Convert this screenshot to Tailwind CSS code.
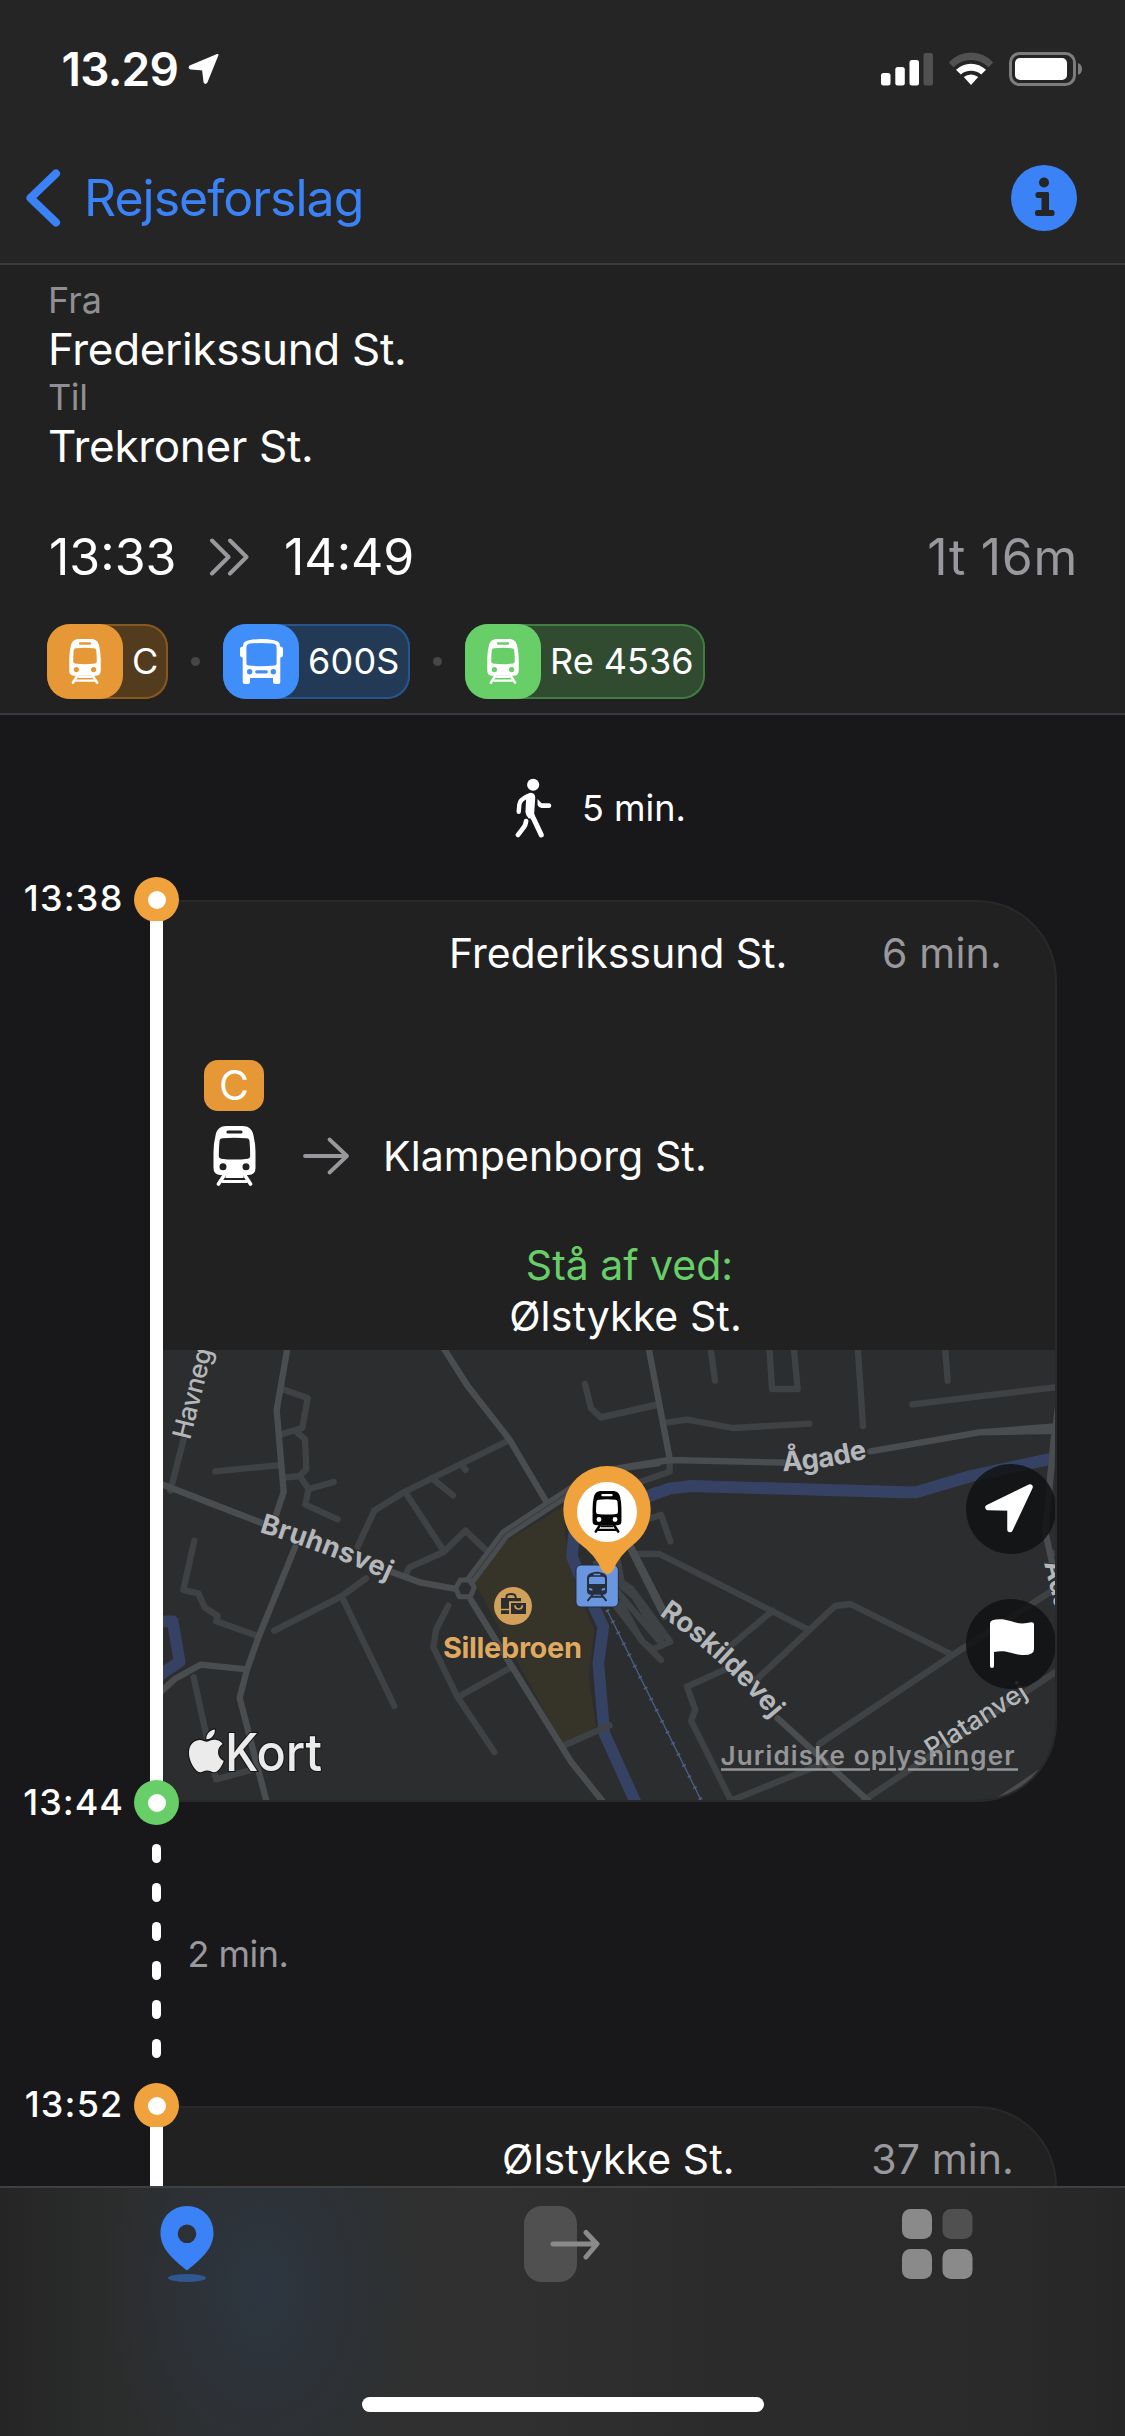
<!DOCTYPE html>
<html lang="da">
<head>
<meta charset="utf-8">
<title>Rejseforslag</title>
<script src="https://cdn.jsdelivr.net/npm/@tailwindcss/browser@4"></script>
</head>
<body class="bg-[#18181a] text-white font-['Inter',sans-serif] font-normal">
<svg width="0" height="0" class="absolute">
  <defs>
    <symbol id="train" viewBox="0 0 42 60">
      <path fill="currentColor" fill-rule="evenodd" d="M13 0H29C35 0 38.500 3 39.800 8.500Q42 18 42 26V42Q42 49 35 49H7Q0 49 0 42V26Q0 18 2.200 8.500C3.500 3 7 0 13 0ZM14.500 4.400a1.600 1.600 0 0 0 0 3.200H27.500a1.600 1.600 0 0 0 0-3.200ZM9 12.300Q6.400 12.300 6 15Q5.300 22 5.300 30Q5.300 32.200 7.500 32.700Q21 34.500 34.500 32.700Q36.700 32.200 36.700 30Q36.700 22 36 15Q35.600 12.300 33 12.300Q21 11.300 9 12.300ZM9.500 37.200a3.500 3.500 0 1 0 0 7a3.500 3.500 0 1 0 0-7ZM32.500 37.200a3.500 3.500 0 1 0 0 7a3.500 3.500 0 1 0 0-7Z"/>
      <path fill="none" stroke="currentColor" stroke-linecap="round" stroke-width="3.600" d="M10.500 49.500L5 58M31.500 49.500L37 58"/>
      <path fill="none" stroke="currentColor" stroke-width="3" d="M8 55.600H34M12 50.500H30" />
    </symbol>
    <symbol id="bus" viewBox="0 0 43 45">
      <path fill="currentColor" fill-rule="evenodd" d="M9 1.200Q21.500 -1 34 1.200Q40 2 40 7V7.500Q43 7.500 43 10V16Q43 18.300 40.300 18.500V43Q40.300 45 38.300 45H35Q33 45 33 43V39H10V43Q10 45 8 45H4.700Q2.700 45 2.700 43V18.500Q0 18.300 0 16V10Q0 7.500 3 7.500V7Q3 2 9 1.200ZM10 4.600Q6.400 5 6.400 8.500V24.500Q6.400 26.300 8.500 26.500Q21.500 28 34.500 26.500Q36.600 26.300 36.600 24.500V8.500Q36.600 5 33 4.600Q21.500 3.300 10 4.600ZM9.700 30a2.700 2.700 0 1 0 0 5.400a2.700 2.700 0 1 0 0-5.400ZM33.300 30a2.700 2.700 0 1 0 0 5.400a2.700 2.700 0 1 0 0-5.400ZM16.700 31.200a1.600 1.600 0 0 0 0 3.200H26.300a1.600 1.600 0 0 0 0-3.200Z"/>
    </symbol>
  </defs>
</svg>

<div class="w-[1125px] h-[2436px] flex flex-col overflow-hidden">

  <!-- Status bar and navigation -->
  <header class="h-[265px] shrink-0 bg-[#252525] border-b-2 border-[#3b3b3c] flex flex-col">
    <div class="h-[138px] pl-[61.500px] pr-[42px] flex justify-between">
      <div class="flex pt-[46px] gap-[10px]">
        <span class="h-[46px] leading-[46px] text-[46px] font-semibold tracking-[-0.76px]">13.29</span>
        <svg class="mt-[7px] w-[32px] h-[32px]" viewBox="0 0 32 32"><path fill="#fff" stroke="#fff" stroke-width="2" stroke-linejoin="round" d="M29.500 2L2 13.500Q1 15 3 15.500L15 16.500L16.500 29Q17.500 31 18.800 28.500Z"/></svg>
      </div>
      <div class="flex pt-[52px] gap-[15px]">
        <svg class="w-[52px] h-[34px]" viewBox="0 0 52 34"><g fill="#fff"><rect x="0" y="21" width="9.500" height="12.500" rx="2.500"/><rect x="14.300" y="15" width="9.500" height="18.500" rx="2.500"/><rect x="28.500" y="8" width="9.500" height="25.500" rx="2.500"/></g><rect x="42.500" y="1" width="9.500" height="32.500" rx="2.500" fill="#515152"/></svg>
        <svg class="w-[46px] h-[34px]" viewBox="0 0 46 34"><path fill="#515152" d="M0.800 10.500Q10 0.500 23 0.500T45.200 10.500L40.500 15.300Q33 8 23 8T5.500 15.300Z"/><path fill="#fff" d="M8 17.700Q14.500 11.700 23 11.700T38 17.700L33.200 22.500Q29 18.800 23 18.800T12.800 22.500ZM15.800 25Q19 22.500 23 22.500T30.200 25L23 33Z"/></svg>
        <svg class="w-[74px] h-[34px]" viewBox="0 0 74 34"><rect x="1.500" y="1.500" width="64" height="31" rx="9" fill="none" stroke="#7d7d7e" stroke-width="3"/><rect x="6" y="6" width="52" height="22" rx="5" fill="#fff"/><path d="M69 11Q73 12.500 73 17T69 23Z" fill="#7d7d7e"/></svg>
      </div>
    </div>
    <div class="h-[120px] pl-[25px] pr-[48px] flex items-center justify-between">
      <div class="flex items-center gap-[23px]">
        <svg class="w-[36px] h-[58px]" viewBox="0 0 36 58"><path d="M31 4.500L5.500 29L31 53.500" fill="none" stroke="#3b82f7" stroke-width="8" stroke-linecap="round" stroke-linejoin="round"/></svg>
        <span class="text-[50px] leading-[60px] tracking-[-1px] text-[#3b82f7]">Rejseforslag</span>
      </div>
      <svg class="w-[66px] h-[66px]" viewBox="0 0 66 66"><circle cx="33" cy="33" r="33" fill="#3b82f7"/><g fill="#252525"><circle cx="33" cy="17.500" r="5"/><rect x="24.500" y="27" width="13.500" height="6" rx="2.500"/><rect x="30.500" y="27" width="7.500" height="23" rx="1.500"/><rect x="24" y="45" width="19.500" height="6" rx="2.500"/></g></svg>
    </div>
  </header>

  <!-- Journey summary -->
  <section class="h-[450px] shrink-0 bg-[#212121] border-b-2 border-[#3a3a3c] pl-[48px] pr-[47px] pt-[11px]">
    <p class="h-[48px] leading-[48px] text-[36px] text-[#8f8f94]">Fra</p>
    <p class="h-[50px] leading-[50px] text-[44px] tracking-[-0.33px]">Frederikssund St.</p>
    <p class="h-[47px] leading-[47px] text-[36px] tracking-[-0.4px] text-[#8f8f94]">Til</p>
    <p class="h-[51px] leading-[51px] text-[44px] tracking-[-0.33px]">Trekroner St.</p>
    <div class="mt-[53px] h-[64px] flex items-center text-[50px] leading-[64px]">
      <span class="w-[161px] pl-px">13:33</span>
      <svg class="w-[40px] h-[38px] mr-[35px]" viewBox="0 0 40 38"><path d="M3 2.500L19.500 19L3 35.500M21 2.500L37.500 19L21 35.500" fill="none" stroke="#98989d" stroke-width="4" stroke-linecap="round" stroke-linejoin="round"/></svg>
      <span>14:49</span>
      <span class="ml-auto tracking-[0.7px] text-[#98989d]">1t 16m</span>
    </div>
    <div class="mt-[35px] -ml-px flex items-center h-[75px] text-[36px] leading-[75px]">
      <div class="w-[121px] h-[75px] rounded-[23px] bg-[#533b1e] inset-ring-2 inset-ring-[#86591f] flex">
        <span class="w-[76px] h-[75px] rounded-[23px] bg-[#e69736] flex items-center justify-center"><svg class="w-[32px] h-[45px]"><use href="#train"/></svg></span>
        <span class="pl-[9px]">C</span>
      </div>
      <i class="size-[9px] rounded-full bg-[#464648] mx-[23px]"></i>
      <div class="w-[187px] h-[75px] rounded-[23px] bg-[#233a56] inset-ring-2 inset-ring-[#27568f] flex">
        <span class="w-[76px] h-[75px] rounded-[23px] bg-[#3f8efa] flex items-center justify-center"><svg class="w-[43px] h-[45px]"><use href="#bus"/></svg></span>
        <span class="pl-[9px] tracking-[0.2px]">600S</span>
      </div>
      <i class="size-[9px] rounded-full bg-[#464648] mx-[23px]"></i>
      <div class="w-[240px] h-[75px] rounded-[23px] bg-[#304b30] inset-ring-2 inset-ring-[#3f7d43] flex">
        <span class="w-[76px] h-[75px] rounded-[23px] bg-[#68ce68] flex items-center justify-center"><svg class="w-[32px] h-[45px]"><use href="#train"/></svg></span>
        <span class="pl-[9px]">Re 4536</span>
      </div>
    </div>
  </section>

  <!-- Timeline -->
  <main class="h-[1471px] shrink-0 overflow-hidden flex flex-col">
    <div class="h-[162px] shrink-0 pl-[515px] pt-[61px] flex gap-[30px]">
      <svg class="mt-[2px] w-[37px] h-[60px]" viewBox="-1 -2 110 178"><circle cx="53" cy="18" r="18" fill="#fff"/><g fill="none" stroke="#fff" stroke-linecap="round" stroke-linejoin="round"><path stroke-width="13" d="M36 52Q14 62 12 76L10 98"/><path stroke-width="15" d="M43 100L55 120L77 167"/><path stroke-width="14" d="M32 126Q30 138 26 143L8 167"/></g><path fill="#fff" d="M30 50Q42 38 53 44Q60 48 59 60L56 103L60 116L40 118Q30 108 30 98L32 62Z"/><path fill="#fff" d="M66 60L78 73H101Q107 74 107 80T101 87H78Q70 87 66 78Z"/></svg>
      <p class="h-[65px] leading-[64px] text-[36px]">5 min.</p>
    </div>

    <div class="h-[903px] shrink-0 flex">
      <p class="w-[123.500px] h-[43px] leading-[43px] text-right text-[36px] font-medium tracking-[1.200px]">13:38</p>
      <div class="w-[45px] ml-[10.500px] relative z-10 flex flex-col items-center">
        <span class="size-[45px] shrink-0 rounded-full bg-[#f0a33c] flex items-center justify-center"><i class="size-[18px] rounded-full bg-white"></i></span>
        <span class="w-[12.500px] flex-1 -mt-[1px] -mb-[2px] bg-white"></span>
      </div>
      <article class="-ml-[16px] mt-[23px] w-[894px] h-[902px] rounded-r-[80px] bg-[#212121] overflow-hidden border-y-2 border-r-2 border-[#29292a] flex flex-col">
        <div class="pt-[26px] h-[158px] flex text-[41px] leading-[51px]">
          <span class="w-[432px] pl-[286px] whitespace-nowrap tracking-[-0.050px]">Frederikssund St.</span>
          <span class="ml-auto pr-[53px] tracking-[0.200px] text-[#98989d]">6 min.</span>
        </div>
        <div class="h-[182px] pl-[41px] flex">
          <div class="w-[60px] flex flex-col items-center">
            <span class="w-[60px] h-[51px] rounded-[14px] bg-[#e69736] text-center text-[41px] leading-[51px]">C</span>
            <svg class="mt-[15px] w-[43px] h-[60px]"><use href="#train"/></svg>
          </div>
          <svg class="mt-[76px] ml-[38px] w-[48px] h-[40px]" viewBox="0 0 48 40"><path d="M3 20H45M27.500 3.500L45 20L27.500 36.500" fill="none" stroke="#98989d" stroke-width="3.800" stroke-linecap="round" stroke-linejoin="round"/></svg>
          <p class="ml-[33px] mt-[71px] h-[51px] leading-[51px] text-[41px] tracking-[0.100px]">Klampenborg St.</p>
        </div>
        <div class="h-[109px] w-[925px] text-center text-[41px] leading-[51px]">
          <p class="-mt-[1px] pl-[8px] text-[#68ce68]">Stå af ved:</p>
          <p class="tracking-[0.100px]">Ølstykke St.</p>
        </div>
        <div class="relative h-[450px] shrink-0 bg-[#2c2d2f]">
          <svg class="w-[893px] h-[450px]" viewBox="-1 -1 893 450">
            <!-- West half of the map -->
            <g transform="translate(-3 -11) scale(.333333)" fill="none" stroke-linecap="round" stroke-linejoin="round">
              <path fill="#363329" d="M1205 500L1040 600L940 725L1205 1215L1305 1160L1283 1010L1300 870L1245 740L1215 600Z"/>
              <g stroke="#3f4244" stroke-width="19">
                <path d="M70 290L28 452M365 148L440 174L424 264L360 283M405 275L432 298L436 388L416 408L370 413M163 394L350 376M416 408L443 447L518 426M443 447L433 494L530 538"/>
                <path d="M100 602L67 750L112 760L131 802L170 828L166 844L290 888M98 1012L165 1318L270 1290M1045 300L730 456L640 512L590 620M735 460L848 632M812 414L876 466M902 374L914 390M976 632L913 572L848 636L745 682L735 702M340 872L540 770L615 715M545 775L700 1098M862 797L825 870L817 922L890 1072L1000 1236M890 1072L1045 985M1205 1218L1345 1156M1272 132L1290 205L1320 232L1490 195"/>
                <path d="M1370 660L1384 740L1420 770L1500 900M1380 790L1440 900L1500 960"/>
              </g>
              <g stroke="#4a4d4f" stroke-width="19">
                <path d="M380 20L347 210L368 456L345 525M-10 428L310 552M403 620L294 888L258 988L118 974L40 1018L-5 1060M258 988L236 1074L318 1390M845 20L920 138L1045 298L1160 492M690 695L780 728L880 746"/>
                <path d="M930 780L1050 975L1230 1265L1330 1390M1400 610L1510 830"/>
              </g>
              <path stroke="#4a4d4f" stroke-width="32" d="M925 725L1032 582L1160 498L1280 420L1360 395"/>
              <path stroke="#4a4d4f" stroke-width="19" d="M1340 405L1400 382L1490 370"/>
              <path stroke="#3c3f42" stroke-width="4" d="M925 725L1032 582L1160 498L1280 420"/>
              <path stroke="#4a4d4f" stroke-width="15" fill="#2c2d2f" d="M898 720H925L940 742L928 770H895L884 745Z"/>
              <path stroke="#364264" stroke-width="35" stroke-linecap="butt" d="M1490 455L1400 500L1240 570L1233 650L1270 740L1327 860L1312 970L1330 1180L1425 1390M-10 844H35L56 965L-10 1010"/>
              <path stroke="#3f4244" stroke-width="19" d="M1305 1174L1345 1156"/>
              <path stroke="#4b5f85" stroke-width="4" d="M1338 810L1625 1390"/>
              <path stroke="#4b5f85" stroke-width="12" stroke-dasharray="5 32" stroke-linecap="butt" d="M1338 810L1625 1390"/>
            </g>
            <!-- East half of the map -->
            <g transform="translate(467 -11) scale(.333333)" fill="none" stroke-linecap="round" stroke-linejoin="round">
              <g stroke="#3f4244" stroke-width="19">
                <path d="M238 20L252 122M415 20L423 147H500L488 20M680 20L696 258M942 20L950 122M844 193L1290 140M-90 232L80 193M105 248L168 239L305 264L535 251M116 365V395L20 428M20 548L90 524L118 604M20 642H85L240 720L530 868M425 812L290 925M370 1025L530 875L612 798L658 792L965 945M1290 735L965 945L565 1212M290 985L168 1040L193 1110L180 1142L300 1382L565 1275M1290 985L700 1380M1260 640H1290"/>
                <path d="M-105 670L-90 740L40 910L65 928L118 905L0 745L-70 700M-70 720L95 915"/>
              </g>
              <g stroke="#4a4d4f" stroke-width="19">
                <path d="M52 20L116 355M-70 390L0 378L116 360L460 368M718 334L1045 277L1290 258M1045 277L1290 272M1290 130L1270 290L1243 575L1270 700M0 620L95 805M440 1135L720 1390M1090 1390L1290 1255"/>
              </g>
              <path stroke="#364264" stroke-width="36" stroke-linecap="butt" d="M20 480L115 446L180 438L820 457H855L1020 408L1290 350"/>
              <path stroke="#4a4d4f" stroke-width="17" d="M1270 270L1255 430"/>
            </g>
            <!-- Street names -->
            <g font-family="Inter, sans-serif" fill="#b4b7ba" stroke="#2c2d2f" stroke-width="1.600" paint-order="stroke">
              <text transform="translate(26 89.500) rotate(-76)" font-size="26" font-weight="500" textLength="93">Havneg</text>
              <path id="bruhn" fill="none" stroke="none" d="M95 181Q168 203 240 237"/>
              <text font-size="27.500" font-weight="700"><textPath href="#bruhn" textLength="138" lengthAdjust="spacing">Bruhnsvej</textPath></text>
              <path id="rosk" fill="none" stroke="none" d="M495 264Q560 308 616 378"/>
              <text font-size="27.500" font-weight="700"><textPath href="#rosk" textLength="154" lengthAdjust="spacing">Roskildevej</textPath></text>
              <path id="agade" fill="none" stroke="none" d="M619 120Q660 119 712 105"/>
              <text font-size="27.500" font-weight="700"><textPath href="#agade" textLength="86" lengthAdjust="spacing">Ågade</textPath></text>
              <text transform="translate(768 407) rotate(-32.500)" font-size="26" font-weight="500" textLength="115">Platanvej</text>
              <text transform="translate(880 212) rotate(76)" font-size="26" font-weight="700">Adal</text>
            </g>
            <text x="279" y="306.500" font-family="Inter, sans-serif" font-size="29" font-weight="700" fill="#dfa95f" stroke="#2c2d2f" stroke-width="1.600" paint-order="stroke" textLength="139">Sillebroen</text>
            <!-- Shopping centre -->
            <g transform="translate(-3 -11) scale(.333333)">
              <circle cx="1056" cy="798" r="57" fill="#d1a05a"/>
              <path d="M1036 778V772Q1036 762 1050 762T1064 772V778" fill="none" stroke="#2c2d2f" stroke-width="6"/>
              <path fill="#2c2d2f" d="M1020 774H1080V784H1044V806H1020ZM1020 811H1044V822H1020ZM1050 789H1095V822H1050Z"/>
              <path d="M1062 796Q1062 807 1073 807T1084 796" fill="none" stroke="#d1a05a" stroke-width="5"/>
              <!-- Station marker -->
              <rect x="1245" y="675" width="127" height="126" rx="15" fill="#6a96e0" stroke="#222c3e" stroke-width="3"/>
              <path fill="#262f3d" fill-rule="evenodd" d="M1293 698Q1308 693 1323 698Q1338 702 1338 714V752Q1338 764 1326 764H1290Q1278 764 1278 752V714Q1278 702 1293 698ZM1298 701V706H1318V701ZM1290 710Q1284 710 1284 716V732H1332V716Q1332 710 1326 710ZM1284 744V750L1294 752V746ZM1332 744V750L1322 752V746Z"/>
              <path d="M1296 762L1281 781M1320 762L1335 781M1292 770H1324" fill="none" stroke="#262f3d" stroke-width="6" stroke-linecap="round"/>
              <!-- Selected stop -->
              <path fill="#f0a33c" d="M1338 378A131 131 0 0 1 1426 606Q1372 648 1357 690Q1341 714 1322 690Q1307 648 1250 606A131 131 0 0 1 1338 378Z"/>
              <circle cx="1338" cy="516" r="90" fill="#fff"/>
              <use href="#train" x="1294" y="453" width="88" height="126" color="#000"/>
            </g>
            <!-- Attribution -->
            <g fill="#ebebec" stroke="#151516" stroke-width="2.200" paint-order="stroke">
              <path transform="translate(21 378.500) scale(1.780)" stroke-width="1.300" d="M12.152 6.896c-.948 0-2.415-1.078-3.960-1.040-2.040.027-3.910 1.183-4.961 3.014-2.117 3.675-.546 9.103 1.519 12.090 1.013 1.454 2.208 3.090 3.792 3.039 1.520-.065 2.090-.987 3.935-.987 1.831 0 2.350.987 3.960.948 1.637-.026 2.676-1.480 3.676-2.948 1.156-1.688 1.636-3.325 1.662-3.415-.039-.013-3.182-1.221-3.220-4.857-.026-3.040 2.480-4.494 2.597-4.559-1.429-2.090-3.623-2.324-4.390-2.376-2-.156-3.675 1.090-4.610 1.090zM15.530 3.830c.843-1.012 1.400-2.427 1.245-3.830-1.207.052-2.662.805-3.532 1.818-.780.896-1.454 2.338-1.273 3.714 1.338.104 2.715-.688 3.559-1.701"/>
              <text x="61" y="420" font-family="Inter, sans-serif" font-size="52" font-weight="500" textLength="97" lengthAdjust="spacingAndGlyphs">Kort</text>
            </g>
            <text x="556.500" y="413.500" font-family="Inter, sans-serif" font-size="26" font-weight="600" fill="#949597" textLength="294">Juridiske oplysninger</text>
            <path d="M557 418.500H706M715 418.500H732M744 418.500H805M823 418.500H854" stroke="#949597" stroke-width="2.400"/>
          </svg>
          <div class="absolute top-[114px] -right-px flex flex-col gap-[45px]">
            <span class="size-[90px] rounded-full bg-[#111213]/85"><svg class="size-[90px]" viewBox="0 0 90 90"><path d="M64 23L22 43.500L44 44V65.500Z" fill="#fff" stroke="#fff" stroke-width="5.500" stroke-linejoin="round"/></svg></span>
            <span class="size-[90px] rounded-full bg-[#111213]/85"><svg class="size-[90px]" viewBox="0 0 90 90"><path d="M24 24.500Q24 20.300 34 20.300C44 20.300 50 26 61 24Q68 22 68 25V50Q68 56 58 56C46 56 42 50.500 28 53V67Q28 69 26 69T24 67Z" fill="#fff"/></svg></span>
          </div>
        </div>
      </article>
    </div>

    <div class="h-[303px] shrink-0 flex">
      <p class="w-[124px] h-[44px] leading-[45px] text-right text-[36px] font-medium tracking-[1px]">13:44</p>
      <div class="w-[45px] ml-[10px] relative z-10 flex flex-col items-center gap-[20.500px]">
        <span class="size-[45px] mb-[-1.500px] shrink-0 rounded-full bg-[#68ce68] flex items-center justify-center"><i class="size-[18px] rounded-full bg-white"></i></span>
        <i class="w-[9px] h-[18.500px] rounded-full bg-white"></i>
        <i class="w-[9px] h-[18.500px] rounded-full bg-white"></i>
        <i class="w-[9px] h-[18.500px] rounded-full bg-white"></i>
        <i class="w-[9px] h-[18.500px] rounded-full bg-white"></i>
        <i class="w-[9px] h-[18.500px] rounded-full bg-white"></i>
        <i class="w-[9px] h-[18.500px] rounded-full bg-white"></i>
      </div>
      <p class="ml-[8.500px] mt-[149px] h-[51px] leading-[51px] text-[36px] tracking-[-0.500px] text-[#98989d]">2 min.</p>
    </div>

    <div class="h-[103px] shrink-0 flex">
      <p class="w-[123.500px] h-[43px] leading-[43px] text-right text-[36px] font-medium tracking-[1.200px]">13:52</p>
      <div class="w-[45px] ml-[10.500px] relative z-10 flex flex-col items-center">
        <span class="size-[45px] shrink-0 rounded-full bg-[#f0a33c] flex items-center justify-center"><i class="size-[18px] rounded-full bg-white"></i></span>
        <span class="w-[12.500px] flex-1 -mt-[1px] bg-white"></span>
      </div>
      <article class="-ml-[16px] mt-[23px] w-[894px] h-[400px] rounded-r-[80px] bg-[#212121] border-y-2 border-r-2 border-[#29292a]">
        <div class="pt-[26px] flex text-[41px] leading-[51px]">
          <span class="pl-[339px] tracking-[0.100px]">Ølstykke St.</span>
          <span class="ml-auto pr-[41px] tracking-[0.100px] text-[#98989d]">37 min.</span>
        </div>
      </article>
    </div>
  </main>

  <!-- Tab bar -->
  <nav class="flex-1 border-t-2 border-[#404042] bg-[radial-gradient(ellipse_160px_230px_at_262px_100px,#2c3640_0%,#2d3136_55%,transparent_100%),linear-gradient(to_right,#252525_0%,#2b2c2c_10%,#2e2f2f_20%,#2f302f_45%,#2b2b2b_65%,#2a2a2a_90%,#262626_100%)] flex flex-col">
    <div class="h-[209px] pt-[18px] pl-[160px] pr-[152px] flex items-start">
      <svg class="w-[54px] h-[78px]" viewBox="0 0 54 78"><path fill="#3b82f7" fill-rule="evenodd" d="M27 0C42 0 53.500 11.500 53.500 27C53.500 43 40 54 27 64.500C14 54 0.500 43 0.500 27C0.500 11.500 12 0 27 0ZM27 18.500a9.300 9.300 0 1 0 0 18.600a9.300 9.300 0 1 0 0-18.600Z"/><ellipse cx="27" cy="72" rx="19" ry="4" fill="#30578f"/></svg>
      <svg class="w-[76px] h-[78px] ml-[310px]" viewBox="0 0 76 78"><rect x="0" y="0" width="53" height="76" rx="18" fill="#505050"/><path d="M29 38H72M62 26.500L73 38L62 51" fill="none" stroke="#8a8a8a" stroke-width="5" stroke-linecap="round" stroke-linejoin="round"/></svg>
      <svg class="w-[71px] h-[74px] ml-auto" viewBox="0 -3 71 74"><g fill="#8a8a8a"><rect width="30" height="30" rx="8.500"/><rect y="40" width="30" height="30" rx="8.500"/><rect x="40.500" y="40" width="30" height="30" rx="8.500"/></g><rect x="40.500" width="30" height="30" rx="8.500" fill="#505050"/></svg>
    </div>
    <div class="w-[402px] h-[15px] ml-[362px] rounded-full bg-white"></div>
  </nav>
</div>
</body>
</html>
